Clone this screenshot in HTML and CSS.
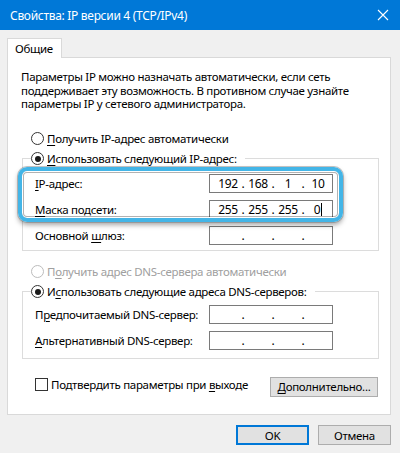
FILE: index.html
```html
<!DOCTYPE html>
<html lang="ru">
<head>
    <meta charset="UTF-8">
    <meta name="viewport" content="width=device-width, initial-scale=1.0">
    <title>Свойства: IP версии 4 (TCP/IPv4)</title>
    <link rel="stylesheet" href="styles.css">
</head>
<body>
    <div class="titlebar">
        <span class="title">Свойства: IP версии 4 (TCP/IPv4)</span>
        <svg class="close" width="12" height="12" viewBox="0 0 12 12">
            <path d="M1 1 L11 11 M11 1 L1 11" stroke="#fff" stroke-width="1.1" fill="none"/>
        </svg>
    </div>

    <div class="dialog">
        <div class="tabs">
            <div class="tab">Общие</div>
        </div>

        <div class="panel">
            <p class="intro">Параметры IP можно назначать автоматически, если сеть поддерживает эту возможность. В противном случае узнайте параметры IP у сетевого администратора.</p>

            <div class="radio-row first">
                <span class="radio"></span>
                <span><u>П</u>олучить IP-адрес автоматически</span>
            </div>

            <fieldset class="group group-ip">
                <legend>
                    <span class="radio checked"></span>
                    <span><u>И</u>спользовать следующий IP-адрес:</span>
                </legend>
                <div class="field-row">
                    <span><u>I</u>P-адрес:</span>
                    <div class="ip-box">
                        <span class="octet">192</span><span class="dot">.</span><span class="octet">168</span><span class="dot">.</span><span class="octet">1</span><span class="dot">.</span><span class="octet">10</span>
                    </div>
                </div>
                <div class="field-row">
                    <span><u>М</u>аска подсети:</span>
                    <div class="ip-box">
                        <span class="octet">255</span><span class="dot">.</span><span class="octet">255</span><span class="dot">.</span><span class="octet">255</span><span class="dot">.</span><span class="octet">0<i class="caret"></i></span>
                    </div>
                </div>
                <div class="field-row">
                    <span>Основной <u>ш</u>люз:</span>
                    <div class="ip-box">
                        <span class="octet"></span><span class="dot">.</span><span class="octet"></span><span class="dot">.</span><span class="octet"></span><span class="dot">.</span><span class="octet"></span>
                    </div>
                </div>
            </fieldset>

            <div class="radio-row disabled">
                <span class="radio"></span>
                <span>П<u>о</u>лучить адрес DNS-сервера автоматически</span>
            </div>

            <fieldset class="group group-dns">
                <legend>
                    <span class="radio checked"></span>
                    <span>И<u>с</u>пользовать следующие адреса DNS-серверов:</span>
                </legend>
                <div class="field-row">
                    <span>П<u>р</u>едпочитаемый DNS-сервер:</span>
                    <div class="ip-box">
                        <span class="octet"></span><span class="dot">.</span><span class="octet"></span><span class="dot">.</span><span class="octet"></span><span class="dot">.</span><span class="octet"></span>
                    </div>
                </div>
                <div class="field-row">
                    <span><u>А</u>льтернативный DNS-сервер:</span>
                    <div class="ip-box">
                        <span class="octet"></span><span class="dot">.</span><span class="octet"></span><span class="dot">.</span><span class="octet"></span><span class="dot">.</span><span class="octet"></span>
                    </div>
                </div>
            </fieldset>

            <div class="bottom-row">
                <label class="check">
                    <span class="checkbox"></span>
                    <span>Подтвердить параметры при <u>в</u>ыходе</span>
                </label>
                <button class="btn btn-more"><u>Д</u>ополнительно...</button>
            </div>

            <!-- callout drawn over the IP and mask rows -->
            <div class="highlight"></div>
        </div>

        <div class="footer">
            <button class="btn btn-ok">OK</button>
            <button class="btn">Отмена</button>
        </div>
    </div>
</body>
</html>
```

FILE: styles.css
```css
body {
    margin: 0;
    padding: 0;
    width: 400px;
    height: 453px;
    overflow: hidden;
    background-color: #f0f0f0;
    font-family: "Noto Sans", "Open Sans", sans-serif;
    font-size: 11.5px;
    letter-spacing: -0.3px;
    color: #000;
}
u {
    text-decoration-thickness: 1px;
    text-underline-offset: 2px;
}
.titlebar {
    height: 30px;
    background-color: #0078d7;
    color: white;
    display: flex;
    align-items: center;
    justify-content: space-between;
    padding: 0 11px 0 10px;
}
.title {
    font-size: 12px;
    letter-spacing: -0.3px;
}
.close {
    display: block;
}
.dialog {
    padding: 8px 9px 0 7px;
}
.tabs {
    display: flex;
    position: relative;
    z-index: 1;
    margin-bottom: -1px;
}
.tab {
    height: 19px;
    line-height: 19px;
    padding: 0 8px 0 7px;
    background: white;
    border: 1px solid #d9d9d9;
    border-bottom: none;
}
.panel {
    position: relative;
    background: white;
    border: 1px solid #d9d9d9;
    padding: 12px 0 0 0;
    height: 344px;
}
.intro {
    margin: 0 18px 0 13px;
    line-height: 13.5px;
}
.radio-row {
    display: flex;
    align-items: center;
    height: 16px;
}
.radio-row.first {
    margin: 20px 0 0 23px;
}
.radio-row.disabled {
    color: #a0a0a0;
    margin: 13px 0 0 23px;
}
.radio {
    width: 11px;
    height: 11px;
    border: 1px solid #333;
    border-radius: 50%;
    margin-right: 3px;
    position: relative;
    flex: none;
}
.disabled .radio {
    border-color: #bcbcbc;
}
.radio.checked::after {
    content: "";
    position: absolute;
    left: 2.5px;
    top: 2.5px;
    width: 6px;
    height: 6px;
    border-radius: 50%;
    background: #1a1a1a;
}
.group {
    margin: 4px 11px 0 14px;
    border: 1px solid #dcdcdc;
    padding: 7px 0 5px 12px;
}
.group legend {
    display: flex;
    align-items: center;
    height: 16px;
    padding: 0 8px 0 0;
    margin-left: -4px;
}
.group-dns {
    padding: 5px 0 8px 12px;
}
.field-row {
    display: grid;
    grid-template-columns: 174px 124px;
    align-items: center;
    height: 19px;
    margin-bottom: 7px;
    white-space: nowrap;
}
.field-row:last-child {
    margin-bottom: 0;
}
.ip-box {
    height: 19px;
    box-sizing: border-box;
    border: 1px solid #7a7a7a;
    display: flex;
    align-items: center;
    padding-left: 5px;
    font-size: 12px;
}
.octet {
    width: 26px;
    text-align: center;
}
.dot {
    width: 4px;
    text-align: center;
}
.caret {
    display: inline-block;
    width: 1px;
    height: 13px;
    background: #000;
    vertical-align: -2px;
    margin-left: 1px;
}
.bottom-row {
    display: flex;
    align-items: center;
    justify-content: space-between;
    margin: 14px 12px 0 27px;
    white-space: nowrap;
}
.check {
    display: flex;
    align-items: center;
}
.checkbox {
    width: 11px;
    height: 11px;
    border: 1px solid #333;
    margin-right: 3px;
}
.btn {
    font-family: inherit;
    font-size: 11.5px;
    letter-spacing: inherit;
    color: #000;
    background: #e1e1e1;
    border: 1px solid #adadad;
    height: 20px;
    padding: 0;
    width: 73px;
}
.btn-more {
    width: 108px;
    margin-top: 4px;
}
.btn-ok {
    border: 2px solid #0078d7;
}
.footer {
    display: flex;
    justify-content: flex-end;
    gap: 9px;
    margin-top: 10px;
}
.highlight {
    position: absolute;
    left: 10px;
    top: 109px;
    width: 325px;
    height: 55px;
    box-sizing: border-box;
    border: 4px solid #43b5e7;
    border-radius: 9px;
    box-shadow: 0 0 0 1px rgba(110, 110, 110, 0.4), 0 3px 5px rgba(0, 0, 0, 0.35), inset 0 0 0 1px #fff, inset 0 0 0 2px rgba(0, 0, 0, 0.3);
}
```
